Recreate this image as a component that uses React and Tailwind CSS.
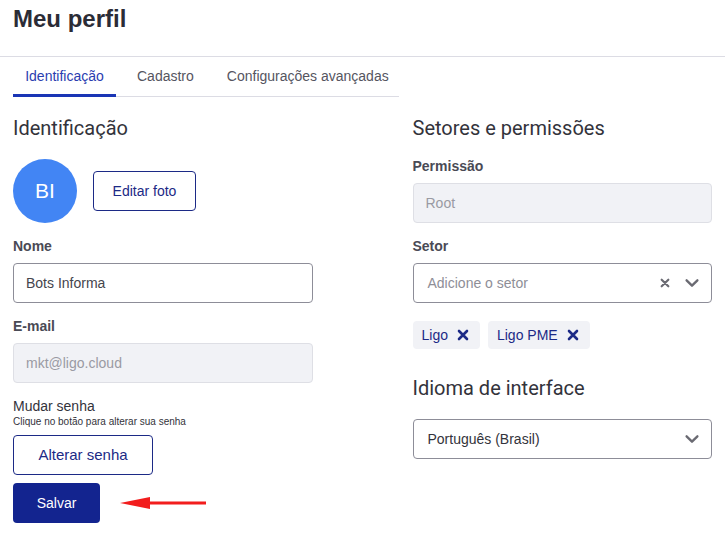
import React from "react";

const ui = { fontFamily: "'Liberation Sans', Arial, sans-serif" };
const head = { fontFamily: "Roboto, 'Noto Sans', sans-serif" };
const arial = { fontFamily: "'Liberation Sans', Arial, sans-serif" };

const Chevron = ({ className }) => (
  <svg viewBox="0 0 20 20" className={className} fill="none">
    <path d="M4 7l6 6 6-6" stroke="currentColor" strokeWidth="2.6" strokeLinecap="round" strokeLinejoin="round" />
  </svg>
);

const Cross = ({ className, w = 2.4 }) => (
  <svg viewBox="0 0 12 12" className={className} fill="none">
    <path d="M2 2l8 8M10 2l-8 8" stroke="currentColor" strokeWidth={w} strokeLinecap="round" />
  </svg>
);

const Label = ({ children }) => (
  <p className="text-[14px] font-bold text-[#4a4a55] leading-5 mb-[7px]" style={ui}>
    {children}
  </p>
);

const Chip = ({ children }) => (
  <div className="h-7 pl-[9px] pr-[11px] rounded bg-[#f1f2f6] flex items-center gap-[9px] text-[14px] text-[#1c2a86]" style={ui}>
    {children}
    <Cross className="w-3 h-3 text-[#1c2a86]" w={2.6} />
  </div>
);

export default function App() {
  return (
    <div className="w-[725px] h-[546px] bg-white overflow-hidden">
      {/* HEADER */}
      <div className="h-[57px] border-b border-[#dcdce4] px-[13px] pt-[4px]">
        <h1 className="text-[24px] font-bold text-[#2b2c36] leading-[30px]" style={ui}>
          Meu perfil
        </h1>
      </div>

      {/* TABS */}
      <div className="ml-[13px] w-[386px] flex border-b border-[#dcdce4] text-[14px] h-[40px] whitespace-nowrap" style={ui}>
        <div className="w-[103px] flex items-center justify-center text-[#2a3db0] border-b-[3px] border-[#1a35b5] -mb-[1px] pt-[2px]">
          Identificação
        </div>
        <div className="ml-[21px] flex items-center text-[#55555f]">Cadastro</div>
        <div className="ml-[33px] flex items-center text-[#55555f]">Configurações avançadas</div>
      </div>

      {/* GRID */}
      <div className="flex px-[13px] gap-[100px] mt-[17px]">
        {/* LEFT */}
        <div className="w-[300px]">
          <h2 className="text-[20px] text-[#33333b] leading-7" style={head}>
            Identificação
          </h2>

          <div className="flex items-center gap-4 mt-[17px]">
            <div className="w-16 h-16 rounded-full bg-[#4285f4] flex items-center justify-center text-white text-[21px]" style={arial}>
              BI
            </div>
            <button className="w-[103px] h-10 rounded border border-[#1c2a86] text-[14px] text-[#1c2a86]" style={arial}>
              Editar foto
            </button>
          </div>

          <div className="mt-[13px]">
            <Label>Nome</Label>
            <div className="h-10 rounded border border-[#8d8d98] px-3 flex items-center text-[14px] text-[#45454d]" style={arial}>
              Bots Informa
            </div>
          </div>

          <div className="mt-[13px]">
            <Label>E-mail</Label>
            <div className="h-10 rounded border border-[#dedfe5] bg-[#f1f2f6] px-3 flex items-center text-[14px] text-[#9a9aa3]" style={arial}>
              mkt@ligo.cloud
            </div>
          </div>

          <div className="mt-[13px]" style={ui}>
            <p className="text-[14px] text-[#33333b] leading-5">Mudar senha</p>
            <p className="text-[10px] text-[#33333b] leading-3">Clique no botão para alterar sua senha</p>
          </div>

          <button className="mt-[7px] w-[140px] h-10 rounded border border-[#1c2a86] text-[15px] text-[#1c2a86] block" style={arial}>
            Alterar senha
          </button>

          <div className="flex items-center mt-2">
            <button className="w-[87px] h-10 rounded bg-[#13248f] text-white text-[14px]" style={arial}>
              Salvar
            </button>
            <svg viewBox="0 0 90 16" className="ml-[18px] w-[90px] h-4">
              <path d="M30 8H88" stroke="#f21d1d" strokeWidth="3" />
              <path d="M2 8L32 2V14Z" fill="#f21d1d" />
            </svg>
          </div>
        </div>

        {/* RIGHT */}
        <div className="w-[300px]">
          <h2 className="text-[20px] text-[#33333b] leading-7" style={head}>
            Setores e permissões
          </h2>

          <div className="mt-[14px]">
            <Label>Permissão</Label>
            <div className="h-10 rounded border border-[#dedfe5] bg-[#f1f2f6] px-3 flex items-center text-[14px] text-[#9a9aa3]" style={arial}>
              Root
            </div>
          </div>

          <div className="mt-[13px]">
            <Label>Setor</Label>
            <div className="h-10 rounded border border-[#8d8d98] pl-[14px] pr-[10px] flex items-center text-[14px] text-[#8e8e97]" style={ui}>
              <span className="flex-1">Adicione o setor</span>
              <Cross className="w-[10px] h-[10px] text-[#6a6a72]" w={2.6} />
              <Chevron className="ml-[13px] w-[18px] h-[18px] text-[#6a6a72]" />
            </div>
          </div>

          <div className="flex gap-2 mt-[18px]">
            <Chip>Ligo</Chip>
            <Chip>Ligo PME</Chip>
          </div>

          <h2 className="text-[20px] text-[#33333b] leading-7 mt-[25px]" style={head}>
            Idioma de interface
          </h2>

          <div className="mt-[17px] h-10 rounded border border-[#8d8d98] pl-[14px] pr-[10px] flex items-center text-[14px] text-[#33333b]" style={ui}>
            <span className="flex-1">Português (Brasil)</span>
            <Chevron className="w-[18px] h-[18px] text-[#6a6a72]" />
          </div>
        </div>
      </div>
    </div>
  );
}
